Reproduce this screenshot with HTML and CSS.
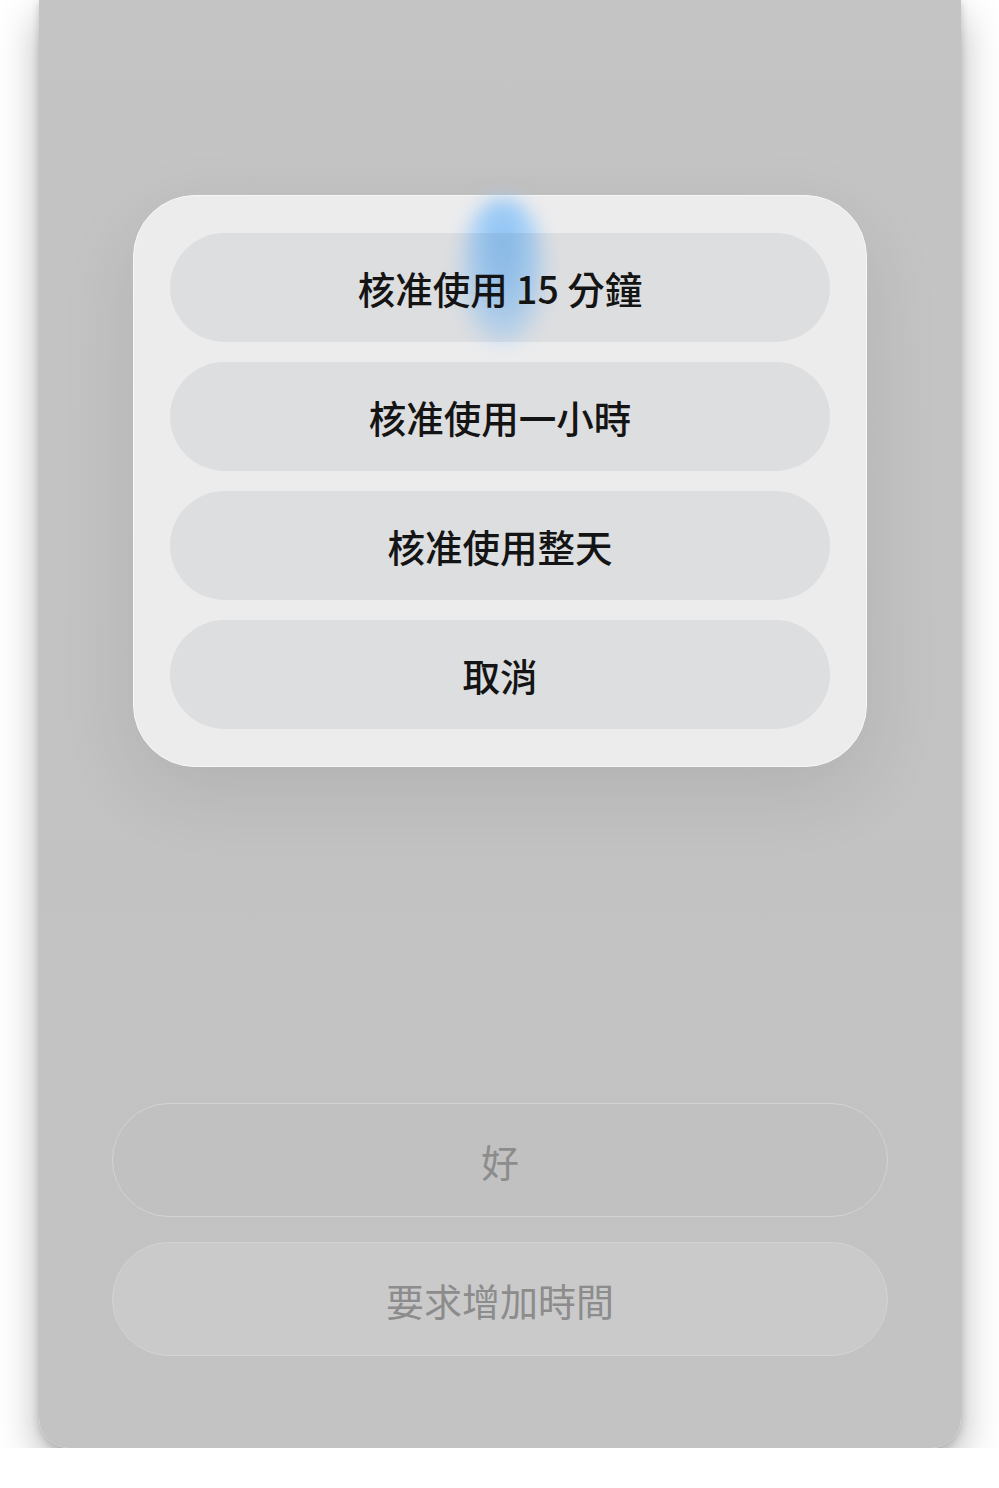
FILE: index.html
```html
<!DOCTYPE html>
<html lang="zh-Hant">
<head>
    <meta charset="UTF-8">
    <meta name="viewport" content="width=device-width, initial-scale=1.0">
    <title>要求增加時間</title>
    <link rel="stylesheet" href="styles.css">
</head>
<body>
    <div class="phone">
        <!-- Action sheet -->
        <div class="sheet">
            <div class="touch"></div>
            <button class="sheet-btn">核准使用 15 分鐘</button>
            <button class="sheet-btn">核准使用一小時</button>
            <button class="sheet-btn">核准使用整天</button>
            <button class="sheet-btn">取消</button>
        </div>

        <!-- Dimmed buttons behind the sheet -->
        <div class="actions">
            <button class="action-btn">好</button>
            <button class="action-btn action-btn-light">要求增加時間</button>
        </div>
    </div>
</body>
</html>
```

FILE: styles.css
```css
:root {
    --panel-color: #c4c4c4;
    --sheet-color: #ececed;
    --text-dark: #141414;
    --text-dim: #8c8c8c;
}

body {
    font-family: 'Noto Sans CJK TC', 'Noto Sans', sans-serif;
    margin: 0;
    background-color: #fff;
}

.phone {
    margin: 0 38px 0 39px;
    height: 1448px;
    box-sizing: border-box;
    padding-top: 195px;
    padding-bottom: 92px;
    display: flex;
    flex-direction: column;
    background: linear-gradient(180deg, #c4c4c4 0%, #c2c2c2 60%, #c3c3c3 100%);
    border-radius: 0 0 30px 30px;
    box-shadow: 0 18px 40px rgba(0,0,0,0.30), 0 2px 8px rgba(0,0,0,0.18);
}

.sheet {
    position: relative;
    isolation: isolate;
    width: 734px;
    margin: 0 auto;
    padding: 37px 36px;
    box-sizing: border-box;
    display: flex;
    flex-direction: column;
    gap: 20px;
    background-color: var(--sheet-color);
    border: 1px solid #f7f7f7;
    border-radius: 62px;
    box-shadow: 0 24px 80px rgba(0,0,0,0.09);
}

.touch {
    position: absolute;
    z-index: -1;
    left: 326px;
    top: 2px;
    width: 86px;
    height: 145px;
    border-radius: 50% 50% 45% 45%;
    background: radial-gradient(ellipse at 50% 32%, #8cc1f3 0%, #a6d0f7 40%, rgba(190,220,250,0.55) 72%, rgba(220,235,250,0) 100%);
    filter: blur(9px);
}

.sheet-btn {
    height: 109px;
    border: none;
    border-radius: 55px;
    background-color: rgba(30,40,50,0.07);
    font-family: inherit;
    font-size: 37.5px;
    font-weight: 500;
    color: var(--text-dark);
    cursor: pointer;
}

.actions {
    margin-top: auto;
    padding: 0 73px;
    display: flex;
    flex-direction: column;
    gap: 25px;
}

.action-btn {
    height: 114px;
    border: 1.5px solid #d3d3d3;
    border-radius: 57px;
    background-color: #c1c1c1;
    font-family: inherit;
    font-size: 38px;
    font-weight: 400;
    color: var(--text-dim);
}

.action-btn-light {
    background-color: #cacaca;
}
```
